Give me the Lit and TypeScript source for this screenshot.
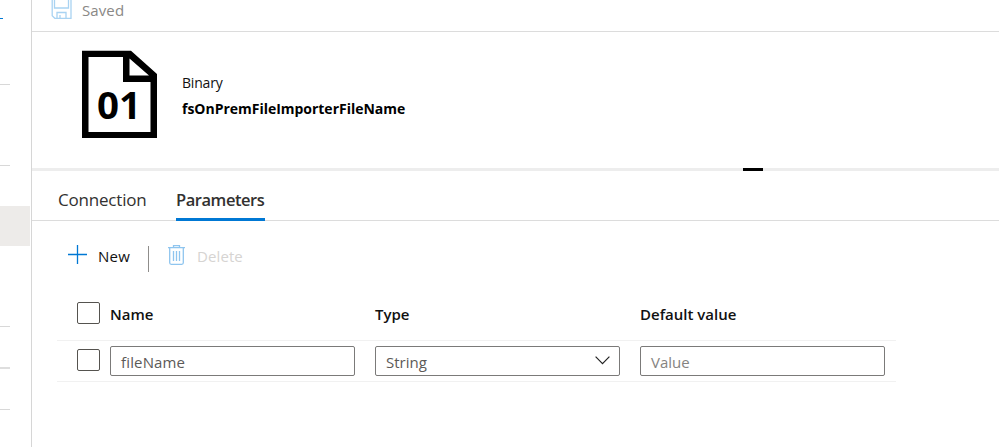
import { LitElement, html, css } from "lit";
import { customElement } from "lit/decorators.js";

const base = css`
  * { box-sizing: border-box; }
  svg { display: block; flex: none; }
`;

@customElement("side-rail")
class SideRail extends LitElement {
  static styles = [base, css`
    :host { box-sizing: border-box; display: flex; flex-direction: column; width: 32px; flex: none; border-right: 1px solid #d6d6d6; overflow: hidden; }
    .accent { width: 3px; height: 19px; border-bottom: 1px solid #0078d4; flex: none; }
    .item { width: 10px; border-bottom: 1px solid #d8d8d8; flex: none; }
    .a { height: 66px; }
    .b { height: 81px; }
    .selected { width: 30px; height: 40px; margin-top: 40px; background: #edebe9; flex: none; }
    .c { height: 81px; }
    .d { height: 42px; border-bottom: 2px solid #dedede; }
    .e { height: 41px; }
  `];
  render() {
    return html`
      <div class="accent"></div>
      <div class="item a"></div>
      <div class="item b"></div>
      <div class="selected"></div>
      <div class="item c"></div>
      <div class="item d"></div>
      <div class="item e"></div>`;
  }
}

@customElement("param-table")
class ParamTable extends LitElement {
  static styles = [base, css`
    :host { display: block; width: 839px; margin: 4px 0 0 25px; }
    .row { display: grid; grid-template-columns: 13px 245px 245px 245px; column-gap: 20px; padding-left: 20px; align-items: start; }
    .head { height: 55px; padding-top: 16px; border-bottom: 1px solid #f1f1f1; font-weight: 600; font-size: 15px; line-height: 24px; color: #111; }
    .body { height: 41px; padding-top: 5px; border-bottom: 1px solid #f1f1f1; }
    .check { width: 23px; height: 22px; border: 1px solid #55534f; border-radius: 2px; }
    .body .check { margin-top: 3px; }
    .field { display: flex; justify-content: space-between; align-items: center; height: 30px; border: 1px solid #7b7a79; border-radius: 2px; padding: 2px 9px 0 10px; font-size: 15px; line-height: 24px; color: #5c5a58; }
    .name { letter-spacing: 0.15px; }
    .placeholder { color: #858381; }
    .chev { margin-top: -3px; }
  `];
  render() {
    return html`
      <div class="row head">
        <div class="check"></div>
        <div>Name</div>
        <div>Type</div>
        <div>Default value</div>
      </div>
      <div class="row body">
        <div class="check"></div>
        <div class="field name">fileName</div>
        <div class="field"><span>String</span>
          <svg class="chev" width="15" height="9" viewBox="0 0 15 9" fill="none" stroke="#222" stroke-width="1.2"><path d="M.6.7 7.5 7.6 14.4.7"/></svg>
        </div>
        <div class="field placeholder">Value</div>
      </div>`;
  }
}

@customElement("app-root")
class AppRoot extends LitElement {
  static styles = [base, css`
    :host { display: flex; width: 999px; height: 447px; overflow: hidden; background: #fff; font-family: "Open Sans", "Noto Sans", sans-serif; white-space: nowrap; }
    .main { flex: 1; min-width: 0; }
    .top { height: 32px; border-bottom: 1px solid #dcdcdc; display: flex; align-items: flex-start; padding-left: 19px; gap: 10px; font-size: 15px; line-height: 20px; color: #8a8886; }
    .saved { letter-spacing: 0.1px; }
    .header { height: 136px; display: flex; padding: 18px 0 0 50px; gap: 25px; }
    .kind { font-size: 14px; line-height: 26px; margin-top: 20px; color: #111; letter-spacing: -0.2px; }
    .title { font-size: 14px; line-height: 26px; font-weight: 700; color: #000; letter-spacing: -0.02px; }
    .splitter { height: 3px; background: #ededed; padding-left: 711px; }
    .grip { width: 20px; height: 3px; background: #000; }
    .tabs { height: 50px; border-bottom: 1px solid #dcdcdc; display: flex; gap: 29px; padding-left: 26px; font-size: 17px; color: #323130; }
    .tab { height: 50px; line-height: 58px; width: 89px; letter-spacing: -0.2px; }
    .active { font-size: 16.5px; font-weight: 600; letter-spacing: -0.45px; border-bottom: 3px solid #0078d4; }
    .tools { display: flex; align-items: center; height: 52px; margin-top: 9px; padding-left: 36px; font-size: 15px; line-height: 24px; color: #111; }
    .plus { margin-top: -4px; }
    .new { margin-left: 11px; width: 50px; letter-spacing: 0.3px; }
    .bar { width: 1px; height: 26px; background: #8f8d8b; margin: 6px 19px 0 0; }
    .trash { margin-top: -2px; }
    .del { margin-left: 12px; color: #d6d4d2; letter-spacing: 0.1px; }
  `];
  render() {
    return html`
      <side-rail></side-rail>
      <div class="main">
        <div class="top">
          <svg width="21" height="20" viewBox="0 0 21 20" fill="none" stroke="#a9d3f2" stroke-width="1.3">
            <path d="M1.200-2V15.800L3.800 18.300H20V-2M3.500-2V8H17.500V-2M6 18V12.500H15V18M9 18V15"/>
          </svg>
          <span class="saved">Saved</span>
        </div>
        <div class="header">
          <svg width="75" height="89" viewBox="0 0 75 89">
            <path fill="#000" fill-rule="evenodd" d="M0 .7H49L75 24V88H0ZM6.500 7V82H68.500V32H41V7ZM47.500 8.500V25.500H67Z"/>
            <text x="15" y="69" font-size="37" font-weight="700" textLength="44" lengthAdjust="spacingAndGlyphs">01</text>
          </svg>
          <div>
            <div class="kind">Binary</div>
            <div class="title">fsOnPremFileImporterFileName</div>
          </div>
        </div>
        <div class="splitter"><div class="grip"></div></div>
        <div class="tabs">
          <div class="tab">Connection</div>
          <div class="tab active">Parameters</div>
        </div>
        <div class="tools">
          <svg class="plus" width="19" height="19" viewBox="0 0 19 19" stroke="#0078d4" stroke-width="1.300"><path d="M9.500 0V19M0 9.500H19"/></svg>
          <span class="new">New</span>
          <div class="bar"></div>
          <svg class="trash" width="17" height="20" viewBox="0 0 17 20" fill="none" stroke="#8fc5ef" stroke-width="1.300">
            <path d="M0 2.700H17M5.500 2.500V.7H11.500V2.500M1.700 3V17.800Q1.700 19.300 3.200 19.300H13.800Q15.300 19.300 15.300 17.800V3M5.500 6V16M8.500 6V16M11.500 6V16"/>
          </svg>
          <span class="del">Delete</span>
        </div>
        <param-table></param-table>
      </div>`;
  }
}
